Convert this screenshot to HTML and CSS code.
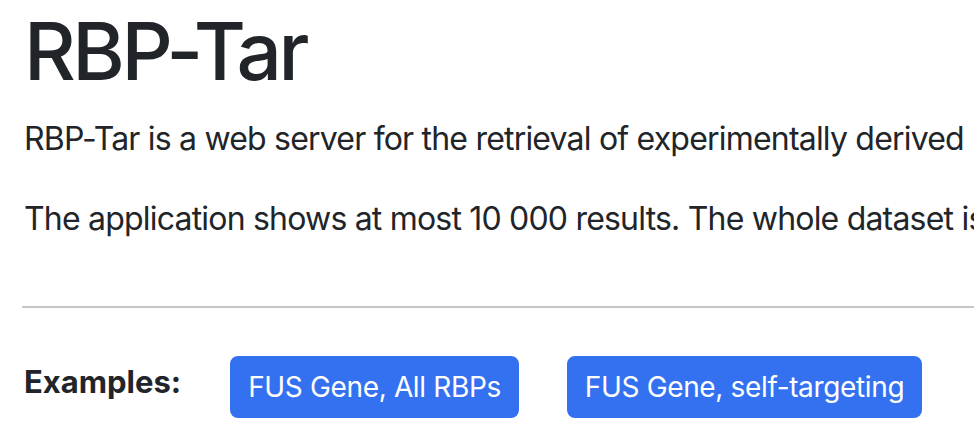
FILE: index.html
```html
<!DOCTYPE html>
<html lang="en">
<head>
  <meta charset="UTF-8">
  <meta name="viewport" content="width=device-width, initial-scale=1.0">
  <title>RBP-Tar</title>
  <link rel="stylesheet" href="styles.css">
</head>
<body>
  <div class="container">
    <h1>RBP-Tar</h1>
    <p>RBP-Tar is a web server for the retrieval of experimentally derived RBP targets from CLIP-seq datasets.</p>
    <p>The application shows at most 10 000 results. The whole dataset is available for download.</p>

    <hr>

    <!-- Example queries -->
    <div class="examples">
      <strong class="examples-label">Examples:</strong>
      <button class="btn">FUS Gene, All RBPs</button>
      <button class="btn">FUS Gene, self-targeting</button>
    </div>
  </div>
</body>
</html>
```

FILE: styles.css
```css
html, body {
  overflow: hidden;
}
body {
  margin: 0;
  font-family: Inter, "Liberation Sans", sans-serif;
  font-size: 32px;
  line-height: 1.5;
  color: #212529;
  background-color: #fff;
}
.container {
  padding: 3px 24px 0;
}
h1 {
  margin: 0 0 16px;
  font-size: 80px;
  font-weight: 500;
  line-height: 1.2;
  letter-spacing: -3.5px;
}
p {
  margin: 0 0 32px;
  white-space: nowrap;
  letter-spacing: -0.8px;
}
hr {
  margin: 63px -24px 48px -2px;
  border: 0;
  border-top: 2px solid #c6c7c8;
}
.examples {
  display: flex;
  align-items: flex-start;
  gap: 48px;
}
.examples-label {
  font-weight: 700;
  font-size: 31px;
  margin: 3px 1px 0 0;
}
.btn {
  font-family: inherit;
  font-size: 28px;
  line-height: 1.5;
  letter-spacing: -0.35px;
  padding: 8px 16px;
  color: #fff;
  background-color: #3471f1;
  border: 2px solid #3471f1;
  border-radius: 8px;
  cursor: pointer;
}
```
